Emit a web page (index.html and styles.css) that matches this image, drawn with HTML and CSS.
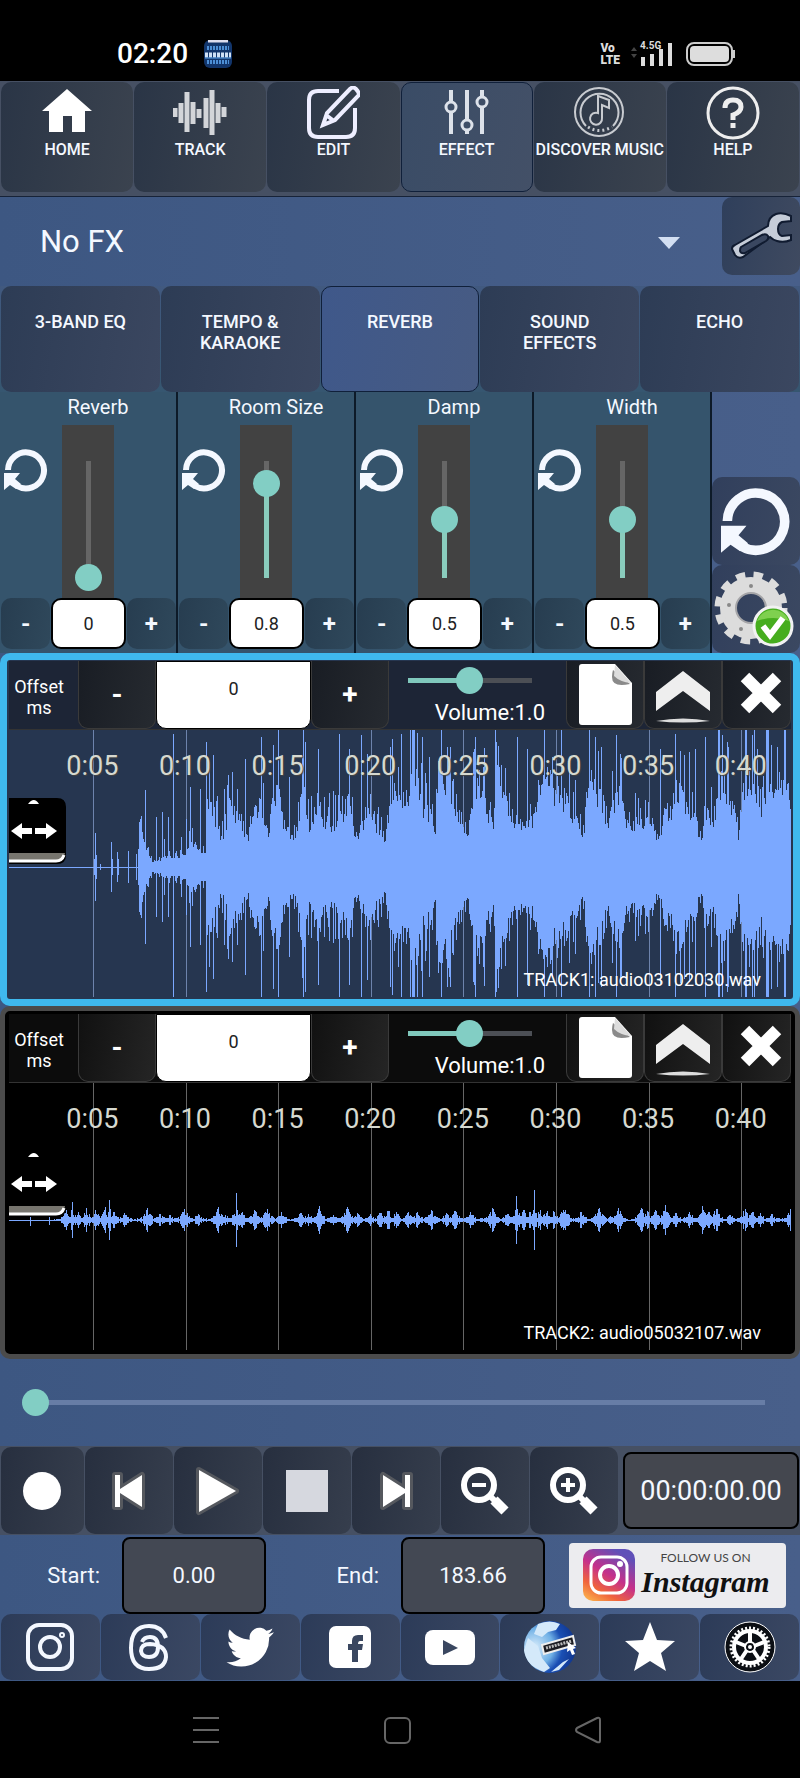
FILE: index.html
```html
<!DOCTYPE html>
<html lang="en">
<head>
  <meta charset="UTF-8">
  <meta name="viewport" content="width=device-width, initial-scale=1.0">
  <title>Audio Editor</title>
  <link rel="stylesheet" href="styles.css">
</head>
<body>
  <!-- Shared icons -->
  <svg class="sprite" aria-hidden="true">
    <symbol id="icon-reset" viewBox="0 0 44 44">
      <path d="M4 22a18 18 0 1 1 9 16" fill="none" stroke="currentColor" stroke-width="6"/>
      <path d="M0 25h16l-5 6 6 5-5 5-6-4-6 5z" fill="currentColor"/>
    </symbol>
    <symbol id="icon-file" viewBox="0 0 56 62">
      <path d="M5 0h33l17 19v39q0 3-3 3H5q-3 0-3-3V3q0-3 3-3z" fill="#fff"/>
      <path d="M36 6l17 14q-18 4-18-7 0-4 1-7z" fill="#8a8a8a"/>
      <path d="M38 1l16 18q-11-1-17-7z" fill="#ddd"/>
    </symbol>
    <symbol id="icon-up" viewBox="0 0 56 62">
      <path d="M28 7l27 21v19L28 27 1 47V28z" fill="#eee"/>
      <path d="M1 57q27-5 54 0-27 3-54 0z" fill="#ddd"/>
    </symbol>
    <symbol id="icon-close" viewBox="0 0 56 62">
      <path d="M16 13l32 32M48 13L16 45" stroke="#fff" stroke-width="12"/>
    </symbol>
    <symbol id="icon-handle" viewBox="0 0 57 66">
      <path d="M0 0h48q9 0 9 9v48q0 9-9 9H0z" fill="#000"/>
      <path d="M0 55h56q-1 9-9 9H0z" fill="#77756e"/>
      <path d="M0 63h47q6 0 8-6" fill="none" stroke="#fff" stroke-width="3"/>
      <path d="M19 6q6-8 11 0z" fill="#fff"/>
      <path d="M2 33l11-8v5h10v6H13v5zM48 33l-11-8v5H26v6h11v5z" fill="#fff"/>
    </symbol>
  </svg>

  <!-- Phone status bar -->
  <div class="status-bar">
    <span class="clock">02:20</span>
    <svg class="app-icon" viewBox="0 0 28 28">
      <rect width="28" height="28" rx="6" fill="#12356b"/>
      <path d="M4 1h20" stroke="#dde" stroke-width="3"/>
      <path d="M3 8h22M3 22h22" stroke="#4d8fd6" stroke-width="4" stroke-dasharray="2 1"/>
      <path d="M1 15h26" stroke="#cfe0f5" stroke-width="5" stroke-dasharray="3 1"/>
      <path d="M1 18h26" stroke="#5ba0e6" stroke-width="1"/>
    </svg>
    <span class="volte">Vo<br>LTE</span>
    <span class="network">
      <span class="network-type">4.5G</span>
      <svg width="44" height="24" viewBox="0 0 44 24">
        <path d="M1 9l3-4 3 4M1 12l3 4 3-4" fill="#444"/>
        <path d="M13 24V15M22 24V12M31 24V7M40 24V1" stroke="#ddd" stroke-width="4"/>
      </svg>
    </span>
    <svg class="battery" width="50" height="24" viewBox="0 0 50 24">
      <rect x="1" y="1" width="45" height="22" rx="7" fill="none" stroke="#ccc" stroke-width="2"/>
      <rect x="4" y="4" width="39" height="16" rx="4" fill="#ddd"/>
      <path d="M48 8v8" stroke="#ccc" stroke-width="2"/>
    </svg>
  </div>

  <!-- Main menu -->
  <nav class="main-menu">
    <button type="button">
      <svg viewBox="0 0 54 54"><path d="M27 3l25 22h-7v21H32V30h-9v16H9V25H2z" fill="#fff"/></svg>
      HOME
    </button>
    <button type="button">
      <svg viewBox="0 0 54 54"><path d="M2 22v9M8 17v20M14 6v40M20 16v22M26 23v9M33 12v30M39 4v45M45 17v20M51 21v10" stroke="#d3d5d9" stroke-width="5"/></svg>
      TRACK
    </button>
    <button type="button">
      <svg viewBox="0 0 54 54" fill="none" stroke="#eef" stroke-width="4">
        <path d="M33 5H12Q3 5 3 14v28q0 9 9 9h28q9 0 9-9V22"/>
        <path d="M17 39l4-12L44 3q3-3 6 0t3 6L29 34zM20 29l8 6"/>
      </svg>
      EDIT
    </button>
    <button type="button" class="selected">
      <svg viewBox="0 0 54 54" fill="none" stroke="#dde2ea" stroke-width="4">
        <path d="M11 4v12M11 26v22M27 4v30M27 44v4M42 4v7M42 21v27"/>
        <g stroke-width="3"><circle cx="11" cy="21" r="5"/><circle cx="27" cy="39" r="5"/><circle cx="42" cy="16" r="5"/></g>
      </svg>
      EFFECT
    </button>
    <button type="button">
      <svg viewBox="0 0 54 54" fill="none" stroke="#c8cbd0" stroke-width="2">
        <circle cx="26" cy="26" r="24"/>
        <path d="M13 40a19 19 0 1 1 27 0"/>
        <path d="M15 41q11 7 24 0" stroke-dasharray="2 3" stroke-width="3"/>
        <path d="M25 27V10l11 4v8l-7-3v13a6 6 0 1 1-4-5z"/>
      </svg>
      DISCOVER MUSIC
    </button>
    <button type="button">
      <svg viewBox="0 0 54 54" fill="none" stroke="#eee">
        <circle cx="27" cy="27" r="25" stroke-width="3"/>
        <path d="M19 22q0-8 8-8t8 7q0 5-8 8v5" stroke-width="5"/>
        <path d="M27 37v5" stroke-width="5"/>
      </svg>
      HELP
    </button>
  </nav>

  <!-- Preset selector -->
  <div class="preset-bar">
    <div class="preset">
      <select aria-label="Effect preset">
        <option>No FX</option>
      </select>
      <svg class="arrow" viewBox="0 0 22 12"><path d="M0 0h22L11 12z" fill="#d3dff2"/></svg>
    </div>
    <button type="button" class="wrench" aria-label="Preset settings">
      <svg viewBox="0 0 78 78">
        <path d="M13 48l33-19q0-9 8-12 7-2 15 2v5l-9 1q-4 2-4 7 0 6 4 7l9-1v5q-7 3-14 1-4-1-7-4L21 60q-5 2-8-2l-3-6q0-3 3-4z" fill="#c5ccd8" stroke="#101b30" stroke-width="2"/>
        <path d="M19 50l21-12q4-2 6 1 1 3-2 5L23 56q-4 1-5-2 0-3 1-4z" fill="#3a4760" stroke="#101b30" stroke-width="2"/>
      </svg>
    </button>
  </div>

  <!-- Effect tabs -->
  <nav class="fx-tabs">
    <button type="button">3-BAND EQ</button>
    <button type="button">TEMPO &amp; KARAOKE</button>
    <button type="button" class="selected">REVERB</button>
    <button type="button">SOUND EFFECTS</button>
    <button type="button">ECHO</button>
  </nav>

  <!-- Reverb controls -->
  <section class="faders">
    <div class="fader">
      <label for="reverb">Reverb</label>
      <div class="fader-body">
        <button type="button" class="reset" aria-label="Reset reverb"><svg><use href="#icon-reset"/></svg></button>
        <div class="fader-slot"><input type="range" id="reverb" min="0" max="1" step="0.1" value="0" style="--fill: 0%"></div>
      </div>
      <div class="stepper">
        <button type="button">-</button>
        <input type="text" value="0" aria-label="Reverb value">
        <button type="button">+</button>
      </div>
    </div>
    <div class="fader">
      <label for="room-size">Room Size</label>
      <div class="fader-body">
        <button type="button" class="reset" aria-label="Reset room size"><svg><use href="#icon-reset"/></svg></button>
        <div class="fader-slot"><input type="range" id="room-size" min="0" max="1" step="0.1" value="0.8" style="--fill: 80%"></div>
      </div>
      <div class="stepper">
        <button type="button">-</button>
        <input type="text" value="0.8" aria-label="Room size value">
        <button type="button">+</button>
      </div>
    </div>
    <div class="fader">
      <label for="damp">Damp</label>
      <div class="fader-body">
        <button type="button" class="reset" aria-label="Reset damp"><svg><use href="#icon-reset"/></svg></button>
        <div class="fader-slot"><input type="range" id="damp" min="0" max="1" step="0.1" value="0.5" style="--fill: 50%"></div>
      </div>
      <div class="stepper">
        <button type="button">-</button>
        <input type="text" value="0.5" aria-label="Damp value">
        <button type="button">+</button>
      </div>
    </div>
    <div class="fader">
      <label for="width">Width</label>
      <div class="fader-body">
        <button type="button" class="reset" aria-label="Reset width"><svg><use href="#icon-reset"/></svg></button>
        <div class="fader-slot"><input type="range" id="width" min="0" max="1" step="0.1" value="0.5" style="--fill: 50%"></div>
      </div>
      <div class="stepper">
        <button type="button">-</button>
        <input type="text" value="0.5" aria-label="Width value">
        <button type="button">+</button>
      </div>
    </div>
    <div class="fader-actions">
      <button type="button" aria-label="Reset all"><svg class="reset-all"><use href="#icon-reset"/></svg></button>
      <button type="button" aria-label="Apply effect">
        <svg class="gear" viewBox="0 0 88 88">
          <circle cx="39" cy="43" r="23" fill="none" stroke="#dcdcdc" stroke-width="16"/>
          <circle cx="39" cy="43" r="32" fill="none" stroke="#dcdcdc" stroke-width="9" stroke-dasharray="9 8"/>
          <circle cx="39" cy="43" r="15" fill="none" stroke="#a5a5a8" stroke-width="2"/>
          <circle cx="39" cy="21" r="2" fill="#888"/><circle cx="17" cy="40" r="2" fill="#888"/><circle cx="29" cy="64" r="2" fill="#888"/>
          <circle cx="61" cy="61" r="19" fill="#46ad1e" stroke="#f2f2f2" stroke-width="3"/>
          <path d="M45 56a17 17 0 0 1 32 0q-15-6-32 0z" fill="#7fd04f"/>
          <path d="M51 61l7 9 13-17" fill="none" stroke="#fff" stroke-width="6"/>
        </svg>
      </button>
    </div>
  </section>

  <!-- Tracks -->
  <section class="track active">
    <div class="track-header">
      <label class="offset-label" for="offset1">Offset<br>ms</label>
      <button type="button">-</button>
      <input type="text" class="offset" id="offset1" value="0">
      <button type="button">+</button>
      <div class="volume">
        <input type="range" id="volume1" min="0" max="2" step="0.1" value="1" style="--fill: 50%">
        <label for="volume1">Volume:1.0</label>
      </div>
      <button type="button" aria-label="File"><svg><use href="#icon-file"/></svg></button>
      <button type="button" aria-label="Collapse"><svg><use href="#icon-up"/></svg></button>
      <button type="button" aria-label="Remove"><svg><use href="#icon-close"/></svg></button>
    </div>
    <div class="wave">
      <svg class="wave-graph" id="wave1" viewBox="0 0 782 268" preserveAspectRatio="none"></svg>
      <div class="ticks">
        <span>0:05</span><span>0:10</span><span>0:15</span><span>0:20</span><span>0:25</span><span>0:30</span><span>0:35</span><span>0:40</span>
      </div>
      <svg class="handle"><use href="#icon-handle"/></svg>
      <span class="track-name">TRACK1: audio03102030.wav</span>
    </div>
  </section>

  <section class="track">
    <div class="track-header">
      <label class="offset-label" for="offset2">Offset<br>ms</label>
      <button type="button">-</button>
      <input type="text" class="offset" id="offset2" value="0">
      <button type="button">+</button>
      <div class="volume">
        <input type="range" id="volume2" min="0" max="2" step="0.1" value="1" style="--fill: 50%">
        <label for="volume2">Volume:1.0</label>
      </div>
      <button type="button" aria-label="File"><svg><use href="#icon-file"/></svg></button>
      <button type="button" aria-label="Collapse"><svg><use href="#icon-up"/></svg></button>
      <button type="button" aria-label="Remove"><svg><use href="#icon-close"/></svg></button>
    </div>
    <div class="wave">
      <svg class="wave-graph" id="wave2" viewBox="0 0 782 268" preserveAspectRatio="none"></svg>
      <div class="ticks">
        <span>0:05</span><span>0:10</span><span>0:15</span><span>0:20</span><span>0:25</span><span>0:30</span><span>0:35</span><span>0:40</span>
      </div>
      <svg class="handle"><use href="#icon-handle"/></svg>
      <span class="track-name">TRACK2: audio05032107.wav</span>
    </div>
  </section>

  <!-- Playback position -->
  <div class="seek">
    <input type="range" min="0" max="184" value="0" aria-label="Playback position" style="--fill: 0%">
  </div>

  <!-- Transport -->
  <div class="transport">
    <button type="button" aria-label="Record"><svg viewBox="0 0 50 50"><circle cx="24" cy="25" r="19" fill="#fff"/></svg></button>
    <button type="button" aria-label="Previous"><svg viewBox="0 0 50 50"><path d="M11 9h5v14l22-14v32L16 27v14h-5z" fill="#fff" stroke="#55585e" stroke-width="6" stroke-linejoin="round" paint-order="stroke"/></svg></button>
    <button type="button" aria-label="Play"><svg viewBox="0 0 50 50"><path d="M6 4l37 21L6 46z" fill="#fff" stroke="#55585e" stroke-width="6" stroke-linejoin="round" paint-order="stroke"/></svg></button>
    <button type="button" aria-label="Stop"><svg viewBox="0 0 50 50"><path d="M4 4h42v42H4z" fill="#d6d8df"/></svg></button>
    <button type="button" aria-label="Next"><svg viewBox="0 0 50 50"><path d="M39 9h-5v14L12 9v32l22-14v14h5z" fill="#fff" stroke="#55585e" stroke-width="6" stroke-linejoin="round" paint-order="stroke"/></svg></button>
    <button type="button" aria-label="Zoom out">
      <svg viewBox="0 0 50 50" fill="none" stroke="#fff"><circle cx="19" cy="19" r="15" stroke-width="6"/><path d="M12 19h14" stroke-width="4"/><path d="M29 29l6 6" stroke-width="6"/><path d="M34 34l11 11" stroke-width="10"/></svg>
    </button>
    <button type="button" aria-label="Zoom in">
      <svg viewBox="0 0 50 50" fill="none" stroke="#fff"><circle cx="19" cy="19" r="15" stroke-width="6"/><path d="M12 19h14M19 12v14" stroke-width="4"/><path d="M29 29l6 6" stroke-width="6"/><path d="M34 34l11 11" stroke-width="10"/></svg>
    </button>
    <output class="time">00:00:00.00</output>
  </div>

  <!-- Selection range -->
  <div class="range-bar">
    <label for="start">Start:</label>
    <input type="text" id="start" value="0.00">
    <label for="end">End:</label>
    <input type="text" id="end" value="183.66">
    <a class="follow" href="#">
      <svg viewBox="0 0 52 52">
        <defs>
          <linearGradient id="insta" x1="0" y1="1" x2="0.6" y2="0">
            <stop offset="0" stop-color="#fdc04f"/><stop offset="0.3" stop-color="#f0643c"/>
            <stop offset="0.6" stop-color="#c5308b"/><stop offset="1" stop-color="#6050b8"/>
          </linearGradient>
        </defs>
        <rect width="52" height="52" rx="10" fill="url(#insta)"/>
        <g fill="none" stroke="#fff" stroke-width="3"><rect x="8" y="8" width="36" height="36" rx="10"/><circle cx="26" cy="26" r="9" stroke-width="4"/></g>
        <circle cx="37" cy="15" r="3" fill="#fff"/>
      </svg>
      <span class="follow-text"><small>FOLLOW US ON</small><em>Instagram</em></span>
    </a>
  </div>

  <!-- Social links -->
  <nav class="social">
    <a href="#" aria-label="Instagram">
      <svg viewBox="0 0 54 54" fill="none" stroke="#f4f8ff" stroke-width="4"><rect x="5" y="5" width="44" height="44" rx="11"/><circle cx="27" cy="27" r="10"/><circle cx="39" cy="15" r="1"/></svg>
    </a>
    <a href="#" aria-label="Threads">
      <svg viewBox="0 0 54 54" fill="none" stroke="#f4f8ff" stroke-width="4"><path d="M43 18Q39 6 26 6 8 6 8 28q0 21 18 21 16 0 17-12 0-12-16-13-9 0-9 7 1 6 8 6 9 0 9-10 0-10-8-10-6 0-8 5"/></svg>
    </a>
    <a href="#" aria-label="Twitter">
      <svg viewBox="-1 -1 26 26"><path fill="#fff" d="M23.500 4.900c-.8.4-1.700.6-2.700.8.900-.6 1.700-1.500 2-2.600-.9.500-1.900.9-2.900 1.100A4.700 4.700 0 0 0 11.900 8.500C8 8.300 4.500 6.400 2.200 3.600c-1.200 2.100-.6 4.900 1.500 6.300-.8 0-1.500-.2-2.100-.6 0 2.200 1.500 4.200 3.700 4.700-.7.200-1.400.2-2.100.1.600 1.900 2.300 3.200 4.400 3.300A9.400 9.400 0 0 1 .7 19.300 13.300 13.300 0 0 0 21.200 7.400c.9-.7 1.700-1.500 2.300-2.500z"/></svg>
    </a>
    <a href="#" aria-label="Facebook">
      <svg viewBox="0 0 54 54"><rect x="6" y="6" width="42" height="42" rx="7" fill="#fff"/><path d="M29 42V30h-4v-6h4v-3q0-6 6-6h5v6h-3q-2 0-2 3h5l-1 6h-4v12z" fill="#3a4760"/></svg>
    </a>
    <a href="#" aria-label="YouTube">
      <svg viewBox="0 0 54 54"><rect x="2" y="10" width="50" height="35" rx="8" fill="#fff"/><path d="M20 20l15 8-15 7z" fill="#3a4760"/></svg>
    </a>
    <a href="#" aria-label="Website">
      <svg viewBox="0 0 54 54">
        <defs><radialGradient id="globe" cx="0.2" cy="0.5" r="0.9"><stop offset="0" stop-color="#d8ecfb"/><stop offset="0.4" stop-color="#6fb0e6"/><stop offset="0.6" stop-color="#1a4fb4"/><stop offset="1" stop-color="#0c2c80"/></radialGradient></defs>
        <circle cx="27" cy="27" r="26" fill="url(#globe)"/>
        <path d="M15 4q12-5 22 0l-4 6-8 2-6 5-8-3zM5 18l10 8 4 12 8 10-6 4Q3 46 1 30zM40 42l6-3-10 11-8 2z" fill="#d4e9fa"/>
        <path d="M19 25l31-9 2 9-31 9z" fill="#1c1c22" stroke="#eee" stroke-width="2"/>
        <path d="M23 28l26-7" stroke="#bbb" stroke-width="3" stroke-dasharray="2 1"/>
        <path d="M45 22l8 6-3 1 2 5-3 1-2-5-3 2z" fill="#fff"/>
      </svg>
    </a>
    <a href="#" aria-label="Rate the app">
      <svg viewBox="0 0 54 54"><path d="M27 2l7 18 18 1-14 12 5 18-16-10-16 10 5-18L2 21l18-1z" fill="#fff"/></svg>
    </a>
    <a href="#" aria-label="Settings">
      <svg viewBox="0 0 54 54">
        <circle cx="27" cy="27" r="25" fill="#0c0f14" stroke="#fff" stroke-width="1"/>
        <g fill="none" stroke="#fff">
          <circle cx="27" cy="27" r="16" stroke-width="4"/>
          <circle cx="27" cy="27" r="19" stroke-width="3" stroke-dasharray="2 2"/>
          <path d="M27 23V12M31 26l10-4M30 30l6 9M24 30l-6 9M23 26l-10-4" stroke-width="4"/>
          <circle cx="27" cy="27" r="5" stroke-width="2"/>
        </g>
        <circle cx="27" cy="27" r="2" fill="#fff"/>
      </svg>
    </a>
  </nav>

  <!-- Phone navigation -->
  <div class="phone-nav">
    <button type="button" aria-label="Menu"><svg viewBox="0 0 28 28"><path d="M1 2h26M1 14h26M1 26h26" stroke="#666" stroke-width="2"/></svg></button>
    <button type="button" aria-label="Home"><svg viewBox="0 0 28 28"><rect x="2" y="2" width="25" height="25" rx="5" fill="none" stroke="#666" stroke-width="2"/></svg></button>
    <button type="button" aria-label="Back"><svg viewBox="0 0 28 28"><path d="M3 12L23 2q3-1 3 2v21q0 2-3 1L3 16q-2-2 0-4z" fill="none" stroke="#666" stroke-width="2"/></svg></button>
  </div>

  <script src="script.js"></script>
</body>
</html>
```
FILE: styles.css
```css
* {
  box-sizing: border-box;
}

html {
  background: #000;
}

body {
  margin: 0;
  background: linear-gradient(90deg, #3d5782, #485f8a);
  color: #f4f8ff;
  font-family: Roboto, "Liberation Sans", sans-serif;
  font-size: 18px;
}

button,
input,
select {
  font: inherit;
  color: inherit;
  border: none;
  padding: 0;
  margin: 0;
  background: none;
  min-width: 0;
}

button {
  cursor: pointer;
}

svg {
  display: block;
}

.sprite {
  display: none;
}

/* Range inputs */
input[type="range"] {
  appearance: none;
  display: block;
  height: 28px;
  background: linear-gradient(to right, #80c8bc var(--fill), var(--rail, #4c4f55) 0) center / calc(100% - 27px) 5px no-repeat;
}

input[type="range"]::-webkit-slider-thumb {
  appearance: none;
  width: 27px;
  height: 27px;
  border-radius: 50%;
  background: #82cec4;
}

/* Status bar */
.status-bar {
  display: flex;
  align-items: center;
  height: 81px;
  padding: 26px 64px 0 117px;
  background: #000;
  color: #fff;
}

.clock {
  font-size: 28px;
  font-weight: 500;
}

.app-icon {
  width: 28px;
  height: 28px;
  margin-left: 16px;
}

.volte {
  margin-left: auto;
  font-size: 12px;
  line-height: 12px;
  font-weight: 900;
  color: #ddd;
}

.network {
  position: relative;
  margin: 0 12px 0 10px;
}

.network-type {
  position: absolute;
  top: -2px;
  left: 10px;
  font-size: 10px;
  line-height: 12px;
  font-weight: 700;
  color: #ddd;
}

/* Main menu */
.main-menu {
  display: grid;
  grid-template-columns: repeat(6, 1fr);
  gap: 1px;
  height: 116px;
  padding: 1px 1px 4px;
  background: #465063;
  border-bottom: 1px solid #172338;
}

.main-menu button {
  display: flex;
  flex-direction: column;
  align-items: center;
  padding-top: 4px;
  border-radius: 10px;
  background: linear-gradient(100deg, #2a3546, #3b434f);
  font-size: 16px;
  font-weight: 500;
  line-height: 20px;
  white-space: nowrap;
}

.main-menu svg {
  width: 54px;
  height: 54px;
}

.main-menu .selected {
  background: linear-gradient(100deg, #3a4c66, #435067);
  border: 1px solid #10203a;
  padding-top: 3px;
}

/* Preset selector */
.preset-bar {
  display: flex;
  height: 89px;
}

.preset {
  position: relative;
  flex: 1;
}

.preset select {
  appearance: none;
  width: 100%;
  height: 100%;
  padding: 0 64px 0 40px;
  font-size: 31px;
}

.arrow {
  position: absolute;
  right: 42px;
  top: 40px;
  width: 22px;
  height: 12px;
  pointer-events: none;
}

.wrench {
  width: 78px;
  height: 78px;
  border-radius: 10px;
  background: linear-gradient(100deg, #2f3f5b, #3f4a60);
}

/* Effect tabs */
.fx-tabs {
  display: grid;
  grid-template-columns: repeat(5, 1fr);
  gap: 1px;
  height: 106px;
  padding: 0 1px;
  background: linear-gradient(#41597f, #365670);
}

.fx-tabs button {
  display: flex;
  align-items: flex-start;
  justify-content: center;
  padding: 25px 20px 0;
  border-radius: 10px;
  background: linear-gradient(100deg, #2d3c55, #3b4760);
  font-weight: 500;
  line-height: 21px;
}

.fx-tabs .selected {
  background: linear-gradient(100deg, #3f588a, #475b83);
  border: 1px solid #10203a;
  padding-top: 24px;
}

/* Faders */
.faders {
  display: flex;
  height: 261px;
}

.fader {
  flex: 2;
  display: flex;
  flex-direction: column;
  min-width: 0;
  background: #35546c;
  border-right: 2px solid #0d1a28;
}

.fader > label {
  padding-left: 20px;
  font-size: 20px;
  line-height: 30px;
  text-align: center;
}

.fader-body {
  flex: 1;
  display: grid;
  grid-template-columns: 1fr 52px 1fr;
  margin-top: 3px;
}

.reset {
  padding-top: 23px;
  align-self: start;
}

.reset svg {
  width: 44px;
  height: 44px;
  margin-left: 4px;
}

.fader-slot {
  display: flex;
  justify-content: center;
  padding-top: 22px;
  background: #424242;
}

.fader-slot input[type="range"] {
  writing-mode: vertical-lr;
  direction: rtl;
  width: 28px;
  height: 144px;
  background: linear-gradient(to top, #8accbd var(--fill), #666 0) center / 5px calc(100% - 27px) no-repeat;
}

.stepper {
  display: grid;
  grid-template-columns: 50fr 75fr 50fr;
  gap: 1px;
  height: 55px;
  padding: 0 0 4px 1px;
}

.stepper button {
  border-radius: 10px;
  background: linear-gradient(100deg, #273d50, #2f485b);
  font-size: 24px;
  font-weight: 700;
}

.stepper input {
  width: 100%;
  border: 2px solid #000;
  border-radius: 10px;
  background: #fff;
  color: #222;
  text-align: center;
}

.fader-actions {
  flex: 1;
  display: flex;
  flex-direction: column;
  justify-content: flex-end;
  min-width: 0;
}

.fader-actions button {
  height: 88px;
  border-radius: 10px;
  background: linear-gradient(100deg, #313f5c, #3b4861);
}

.reset-all {
  width: 70px;
  height: 70px;
  margin: 0 auto;
}

.gear {
  width: 100%;
  height: 88px;
}

/* Tracks */
.track {
  border: 5px solid #4b4b4b;
  border-radius: 10px;
  padding: 3px 4px;
  background: #000;
  color: #fff;
}

.track.active {
  border: 7px solid #3fb9ee;
  padding: 1px 2px;
  background: #263650;
}

.track-header {
  display: grid;
  grid-template-columns: 69fr 78fr 155fr 78fr 177fr 78fr 78fr 69fr;
  height: 69px;
  background: #0c0c0c;
  border-bottom: 1px solid #333;
}

.active .track-header {
  background: #1d2536;
}

.offset-label {
  padding: 15px 9px 0 0;
  line-height: 21px;
  text-align: center;
}

.track-header button {
  height: 68px;
  border: 1px solid #3a3a3a;
  border-top: none;
  border-radius: 0 0 10px 10px;
  background: linear-gradient(100deg, #111, #252525);
  font-size: 28px;
  font-weight: 700;
}

.active .track-header button {
  background: linear-gradient(100deg, #191d24, #262a30);
}

.track-header button svg {
  width: 56px;
  height: 62px;
  margin: 0 auto;
}

.track-header .offset {
  width: 100%;
  height: 68px;
  padding-bottom: 14px;
  border: 1px solid #000;
  border-radius: 0 0 10px 10px;
  background: #fff;
  color: #222;
  text-align: center;
}

.volume {
  padding: 5px 21px 0 5px;
  text-align: right;
  font-size: 22px;
  line-height: 38px;
}

.volume input {
  width: 100%;
}

.wave {
  position: relative;
  height: 268px;
}

.wave-graph {
  width: 100%;
  height: 100%;
  fill: #7ba8ff;
}

.wave-graph .grid {
  fill: #666;
}

.active .wave-graph .grid {
  fill: #6d83ac;
}

.ticks {
  position: absolute;
  inset: 0;
  display: grid;
  grid-template-columns: repeat(8, 1fr);
  padding: 20px 4px 0 37px;
  color: #d6d9d0;
  font-size: 27px;
  line-height: 32px;
  text-align: center;
}

.active .ticks {
  text-shadow: 1px 1px 1px #444;
}

.handle {
  position: absolute;
  left: 0;
  top: 68px;
  width: 57px;
  height: 66px;
}

.track-name {
  position: absolute;
  right: 30px;
  bottom: 8px;
  line-height: 21px;
}

/* Seek bar */
.seek {
  --rail: #677da6;
  height: 87px;
  padding: 29px 22px 0;
}

.seek input {
  width: 100%;
}

/* Transport */
.transport {
  display: grid;
  grid-template-columns: 83fr repeat(6, 88fr) 180fr;
  gap: 1px;
  height: 89px;
  padding: 1px;
  background: #465063;
}

.transport button {
  border-radius: 10px;
  background: linear-gradient(100deg, #272f3f, #363e4d);
}

.transport svg {
  width: 50px;
  height: 50px;
  margin: 0 auto;
}

.time {
  display: flex;
  align-items: center;
  justify-content: center;
  margin: 5px 0 5px 4px;
  border: 2px solid #000;
  border-radius: 8px;
  background: #44474f;
  font-size: 27px;
}

/* Selection range */
.range-bar {
  display: grid;
  grid-template-columns: 122fr 144fr 135fr 144fr 255fr;
  align-items: center;
  height: 79px;
  padding-top: 1px;
  font-size: 22px;
}

.range-bar label {
  padding-right: 22px;
  text-align: right;
}

.range-bar input {
  width: 100%;
  height: 77px;
  border: 2px solid #000;
  border-radius: 8px;
  background: #434853;
  text-align: center;
}

.follow {
  display: flex;
  align-items: center;
  height: 65px;
  margin: 0 14px 0 24px;
  padding: 0 10px 0 14px;
  border-radius: 4px;
  background: #ececef;
  color: #111;
  text-decoration: none;
}

.follow svg {
  width: 52px;
  height: 52px;
}

.follow-text {
  flex: 1;
  display: flex;
  flex-direction: column;
  align-items: center;
}

.follow small {
  font-family: Lato, sans-serif;
  font-size: 12px;
  line-height: 14px;
  color: #444;
}

.follow em {
  font-family: "Liberation Serif", serif;
  font-size: 30px;
  font-weight: 700;
  line-height: 34px;
}

/* Social links */
.social {
  display: grid;
  grid-template-columns: repeat(8, 1fr);
  gap: 1px;
  height: 67px;
  padding: 0 1px 1px;
}

.social a {
  display: flex;
  align-items: center;
  justify-content: center;
  border-radius: 10px;
  background: linear-gradient(100deg, #2c3b58, #3b4863);
}

.social svg {
  width: 54px;
  height: 54px;
}

/* Phone navigation */
.phone-nav {
  display: flex;
  justify-content: center;
  gap: 163px;
  height: 98px;
  padding-right: 6px;
  background: #000;
}

.phone-nav svg {
  width: 28px;
  height: 28px;
}
```
FILE: script.js
```js
const SVG_NS = 'http://www.w3.org/2000/svg';
const MIDDLE = 137;

// Small repeatable variation, so the graph is the same on each load
function noise(x) {
  const n = Math.sin(x * 12.9898) * 43758.5453;
  return n - Math.floor(n);
}

function addPath(id, d, className) {
  const path = document.createElementNS(SVG_NS, 'path');
  path.setAttribute('d', d);
  path.setAttribute('class', className);
  document.getElementById(id).appendChild(path);
}

function drawWave(id, heightAt) {
  // One line for every five seconds
  let grid = '';
  for (let i = 0; i < 8; i++) {
    grid += `M${Math.round(84 + i * 92.6)} 0h1v267h-1z`;
  }
  addPath(id, grid, 'grid');

  let d = `M0 ${MIDDLE}h782v1H0z`;
  for (let x = 0; x < 782; x++) {
    const h = Math.round(heightAt(x));
    const up = Math.min(MIDDLE, h);
    const down = Math.min(130, h);
    if (h > 0) d += `M${x} ${MIDDLE - up}h1v${up + down}h-1z`;
  }
  addPath(id, d, 'samples');
}

// Track 1: loud body [x, height] with single peaks on top
const body = [
  [0, 0], [128, 0], [130, 28], [135, 22], [143, 4], [160, 9], [175, 9], [182, 22], [196, 10],
  [197, 60], [203, 50], [213, 18], [221, 60], [238, 22], [251, 55], [259, 25], [267, 80],
  [274, 40], [284, 20], [295, 70], [301, 30], [309, 55], [316, 35], [326, 38], [341, 60],
  [346, 18], [359, 50], [376, 18], [383, 80], [393, 55], [404, 85], [416, 50], [426, 32],
  [432, 90], [439, 70], [451, 32], [459, 28], [466, 80], [477, 60], [484, 25], [488, 90],
  [496, 70], [506, 35], [521, 35], [536, 85], [551, 65], [566, 45], [573, 20], [581, 80],
  [591, 60], [596, 28], [609, 70], [616, 40], [631, 36], [641, 38], [648, 20], [656, 45],
  [671, 65], [681, 50], [692, 20], [697, 45], [705, 35], [711, 80], [721, 65], [729, 25],
  [736, 85], [746, 75], [751, 55], [761, 85], [771, 65], [778, 75], [782, 50]
];
const peaks = {
  85: 8, 86: 34, 87: 12, 91: 3, 102: 25, 103: 8, 108: 15, 109: 8, 119: 16, 127: 13, 130: 45,
  133: 35, 136: 77, 139: 20, 147: 50, 153: 55, 155: 28, 159: 50, 164: 133, 172: 30, 177: 48,
  181: 80, 191: 78, 197: 125, 200: 100, 204: 112, 208: 70, 215: 78, 219: 92, 223: 85,
  236: 108, 245: 60, 252: 130, 264: 122, 269: 137, 280: 90, 289: 65, 294: 137, 296: 125,
  309: 118, 324: 76, 330: 133, 340: 118, 343: 70, 352: 132, 358: 113, 369: 60, 381: 120,
  383: 128, 389: 100, 392: 133, 401: 137, 403: 137, 404: 137, 405: 137, 413: 130, 420: 110,
  432: 137, 440: 110, 465: 118, 466: 130, 474: 100, 486: 137, 487: 125, 508: 130, 518: 118,
  535: 137, 543: 110, 552: 137, 580: 137, 586: 130, 592: 120, 607: 132, 651: 118, 666: 133,
  680: 115, 686: 118, 696: 130, 709: 137, 710: 137, 719: 120, 736: 137, 737: 137, 745: 137,
  748: 118, 757: 137, 758: 137, 759: 137, 768: 120, 775: 137, 776: 137
};

drawWave('wave1', x => {
  const i = Math.max(1, body.findIndex(p => p[0] >= x));
  const [x0, h0] = body[i - 1];
  const [x1, h1] = body[i];
  let base = h0 + (h1 - h0) * (x - x0) / (x1 - x0);
  // Keep the loud part from thinning out between two swells
  if (x > 200) base = base * 0.8 + 9;
  const spread = noise(x) > 0.7 ? 1.1 : 0.5;
  return Math.max(peaks[x] || 0, base * (0.9 + spread * noise(x + 500)));
});

// Track 2: quiet, each hit fades on both sides
const hits = [
  [21, 6], [40, 5], [57, 10], [63, 18], [69, 8], [77, 12], [86, 10], [96, 13], [100, 20],
  [104, 8], [115, 7], [138, 12], [151, 6], [161, 5], [175, 11], [189, 6], [209, 13], [216, 5],
  [227, 27], [233, 8], [245, 10], [258, 11], [272, 8], [291, 7], [299, 6], [310, 14],
  [324, 5], [338, 13], [348, 7], [361, 6], [371, 7], [379, 9], [387, 8], [399, 8], [408, 8],
  [422, 10], [437, 7], [446, 9], [461, 8], [483, 12], [498, 6], [507, 24], [515, 10],
  [520, 8], [525, 30], [531, 10], [538, 9], [544, 9], [554, 10], [556, 10], [572, 8],
  [586, 6], [590, 12], [601, 4], [609, 12], [632, 12], [638, 9], [646, 10], [656, 15],
  [666, 7], [680, 8], [693, 14], [699, 8], [707, 11], [721, 5], [736, 11], [743, 8],
  [751, 7], [763, 6], [781, 11]
];

drawWave('wave2', x => {
  let h = x > 55 ? noise(x) * 2 : 0;
  for (const [at, size] of hits) {
    const d = Math.abs(x - at);
    if (d === 0) h = Math.max(h, size);
    else if (at > 50) h = Math.max(h, Math.min(size, 11) * 0.9 * Math.exp(-d / 4) * (0.5 + noise(x)));
  }
  return h;
});
```
